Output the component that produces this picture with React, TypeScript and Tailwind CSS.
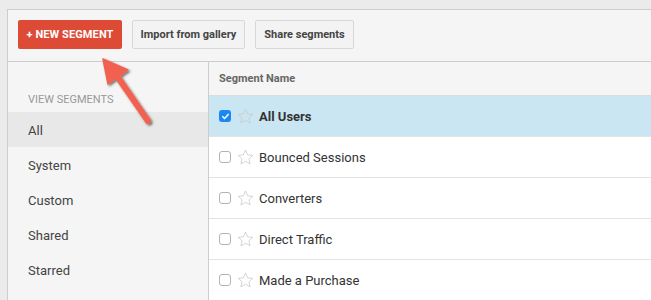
import React from 'react';

const categories = ['All', 'System', 'Custom', 'Shared', 'Starred', 'Subscribed'];

const segments = [
  { name: 'All Users', checked: true },
  { name: 'Bounced Sessions', checked: false },
  { name: 'Converters', checked: false },
  { name: 'Direct Traffic', checked: false },
  { name: 'Made a Purchase', checked: false },
  { name: 'Mobile and Tablet Traffic', checked: false },
];

function Star() {
  return (
    <svg width="17" height="16" viewBox="0 0 24 23" className="shrink-0">
      <path
        d="M12 1.5l3.1 6.9 7.4.7-5.6 5 1.7 7.3L12 17.6l-6.6 3.8 1.7-7.3-5.6-5 7.4-.7z"
        fill="none"
        stroke="#c8c8c8"
        strokeWidth="1.1"
        strokeLinejoin="round"
      />
    </svg>
  );
}

function Checkbox({ checked }: { checked: boolean }) {
  if (checked) {
    return (
      <div className="w-[12px] h-[12px] rounded-[3px] bg-[#1a87f5] flex items-center justify-center shrink-0">
        <svg width="9" height="9" viewBox="0 0 10 10">
          <path d="M2 5.2l2 2.1 4-4.6" fill="none" stroke="#fff" strokeWidth="1.7" strokeLinecap="round" strokeLinejoin="round" />
        </svg>
      </div>
    );
  }
  return <div className="w-[12px] h-[12px] rounded-[3px] border border-[#b3b3b3] bg-white shrink-0" />;
}

export default function App() {
  return (
    <div className="relative w-[651px] h-[300px] overflow-hidden bg-[#ebebeb] font-['Roboto',sans-serif]">
      <div className="ml-[7px] mt-[9px] h-[291px] border-l border-t border-[#cdcdcd] bg-[#f5f5f5] flex flex-col">
        {/* Toolbar */}
        <div className="h-[52px] shrink-0 border-b border-[#cdcdcd] pt-[10px] pl-[10px] flex gap-[10px]">
          <button className="h-[29px] w-[104px] pt-[1px] rounded-[2px] bg-[#dd4b36] text-white text-[11px] font-bold tracking-[0.1px]">
            + NEW SEGMENT
          </button>
          <button className="h-[29px] w-[113px] pt-[1px] rounded-[2px] border border-[#d8d8d8] bg-[#f3f3f3] text-[#444] text-[11px] font-bold">
            Import from gallery
          </button>
          <button className="h-[29px] w-[99px] pt-[1px] rounded-[2px] border border-[#d8d8d8] bg-[#f3f3f3] text-[#444] text-[11px] font-bold">
            Share segments
          </button>
        </div>

        <div className="flex flex-1 min-h-0">
          {/* Sidebar */}
          <div className="w-[201px] shrink-0 border-r border-[#cdcdcd] pt-[31px]">
            <div className="pl-[20px] h-[14px] leading-[14px] text-[11px] text-[#999] mb-[5px]">VIEW SEGMENTS</div>
            {categories.map((c, i) => (
              <div
                key={c}
                className={`h-[35px] pt-[2px] flex items-center pl-[20px] text-[13px] text-[#444] ${i === 0 ? 'bg-[#e8e8e8]' : ''}`}
              >
                {c}
              </div>
            ))}
          </div>

          {/* Table */}
          <div className="flex-1 bg-white">
            <div className="h-[34px] pt-[2px] bg-[#f5f5f5] border-b border-[#dcdcdc] flex items-center pl-[10px] text-[11px] font-bold text-[#666]">
              Segment Name
            </div>
            {segments.map(s => (
              <div
                key={s.name}
                className={`h-[41px] border-b border-[#e3e3e3] flex items-center pl-[10px] ${s.checked ? 'bg-[#c9e6f2]' : 'bg-white'}`}
              >
                <Checkbox checked={s.checked} />
                <div className="ml-[6px]">
                  <Star />
                </div>
                <span className={`ml-[5px] pt-[2px] text-[13px] text-[#333] ${s.checked ? 'font-bold' : ''}`}>{s.name}</span>
              </div>
            ))}
          </div>
        </div>
      </div>

      {/* Callout arrow */}
      <svg className="absolute left-0 top-0 pointer-events-none" width="651" height="300">
        <defs>
          <filter id="arrowShadow" x="-30%" y="-30%" width="160%" height="160%">
            <feDropShadow dx="1.5" dy="1.5" stdDeviation="1.2" floodColor="#000" floodOpacity="0.55" />
          </filter>
        </defs>
        <g filter="url(#arrowShadow)">
          <line x1="117" y1="76" x2="148" y2="121" stroke="#f2614f" strokeWidth="6" strokeLinecap="round" />
          <polygon points="103,59 128,70 108,84" fill="#f2614f" stroke="#f2614f" strokeWidth="1.5" strokeLinejoin="round" />
        </g>
      </svg>
    </div>
  );
}
